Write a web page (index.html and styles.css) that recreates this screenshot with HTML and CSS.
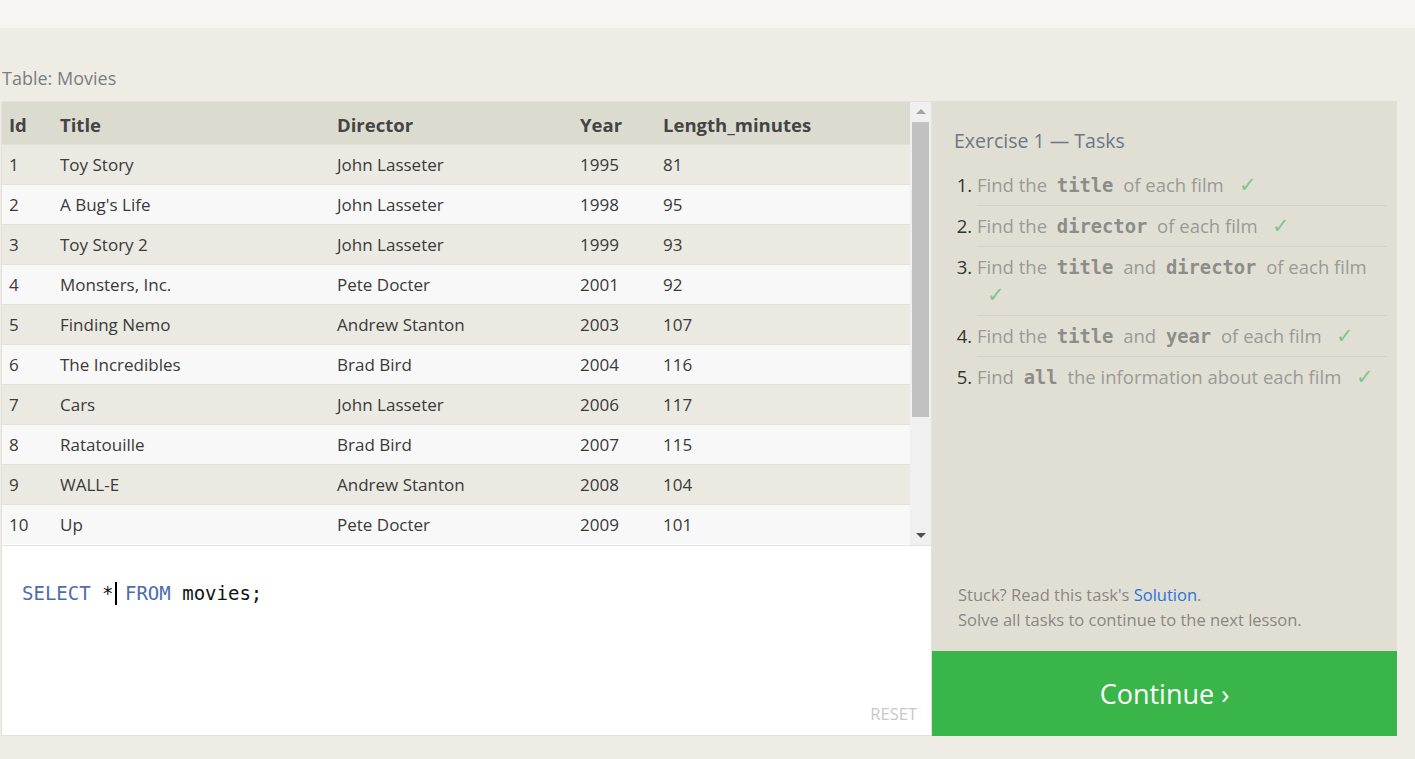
FILE: index.html
```html
<!DOCTYPE html>
<html>
<head>
<meta charset="utf-8">
<link rel="stylesheet" href="styles.css">
</head>
<body>
<div class="topbar"></div>
<div class="label">Table: Movies</div>
<div class="main">
  <div class="left">
    <div class="tablewrap">
      <div class="tablescroll">
        <table class="movies">
          <colgroup><col class="c1"><col class="c2"><col class="c3"><col class="c4"><col class="c5"></colgroup>
          <thead><tr><th>Id</th><th>Title</th><th>Director</th><th>Year</th><th>Length_minutes</th></tr></thead>
          <tbody>
            <tr><td>1</td><td>Toy Story</td><td>John Lasseter</td><td>1995</td><td>81</td></tr>
            <tr><td>2</td><td>A Bug's Life</td><td>John Lasseter</td><td>1998</td><td>95</td></tr>
            <tr><td>3</td><td>Toy Story 2</td><td>John Lasseter</td><td>1999</td><td>93</td></tr>
            <tr><td>4</td><td>Monsters, Inc.</td><td>Pete Docter</td><td>2001</td><td>92</td></tr>
            <tr><td>5</td><td>Finding Nemo</td><td>Andrew Stanton</td><td>2003</td><td>107</td></tr>
            <tr><td>6</td><td>The Incredibles</td><td>Brad Bird</td><td>2004</td><td>116</td></tr>
            <tr><td>7</td><td>Cars</td><td>John Lasseter</td><td>2006</td><td>117</td></tr>
            <tr><td>8</td><td>Ratatouille</td><td>Brad Bird</td><td>2007</td><td>115</td></tr>
            <tr><td>9</td><td>WALL-E</td><td>Andrew Stanton</td><td>2008</td><td>104</td></tr>
            <tr><td>10</td><td>Up</td><td>Pete Docter</td><td>2009</td><td>101</td></tr>
          </tbody>
        </table>
      </div>
      <div class="scrollbar">
        <div class="arrow up"></div>
        <div class="thumb"></div>
        <div class="track"></div>
        <div class="arrow down"></div>
      </div>
    </div>
    <div class="editor">
      <div class="code"><span class="kw">SELECT</span> *<span class="caret"></span> <span class="kw">FROM</span> movies;</div>
      <div class="reset">RESET</div>
    </div>
  </div>
  <div class="right">
    <div class="tasks">
      <div class="tasks-title">Exercise 1 — Tasks</div>
      <ol class="tasklist">
        <li>Find the <code>title</code> of each film <span class="check">✓</span></li>
        <li>Find the <code>director</code> of each film <span class="check">✓</span></li>
        <li>Find the <code>title</code> and <code>director</code> of each film <span class="check">✓</span></li>
        <li>Find the <code>title</code> and <code>year</code> of each film <span class="check">✓</span></li>
        <li>Find <code>all</code> the information about each film <span class="check">✓</span></li>
      </ol>
    </div>
    <div class="help">
      <div>Stuck? Read this task's <a class="link">Solution</a>.</div>
      <div>Solve all tasks to continue to the next lesson.</div>
    </div>
    <div class="continue">Continue ›</div>
  </div>
</div>
</body>
</html>
```

FILE: styles.css
```css
html, body {
  margin: 0;
  padding: 0;
}
body {
  background: #efece5;
  font-family: "Open Sans", "Noto Sans", sans-serif;
  width: 1415px;
  height: 759px;
  overflow: hidden;
}
.topbar {
  height: 28px;
  background: #f6f5f1;
}
.label {
  margin: 38px 0 0 2px;
  height: 35px;
  font-size: 18px;
  line-height: 24px;
  color: #7d7d7d;
}
.main {
  display: flex;
  margin-left: 1px;
  width: 1397px;
  height: 635px;
}
.left {
  box-sizing: border-box;
  width: 931px;
  height: 635px;
  border: 1px solid #e4e2da;
  background: #fff;
  display: flex;
  flex-direction: column;
}
.tablewrap {
  display: flex;
  height: 443px;
  border-bottom: 1px solid #e4e2da;
}
.tablescroll {
  width: 908px;
  overflow: hidden;
}
.movies {
  border-collapse: collapse;
  width: 908px;
  table-layout: fixed;
  font-size: 17px;
  color: #3a3a3a;
}
.c1 { width: 51px; }
.c2 { width: 277px; }
.c3 { width: 243px; }
.c4 { width: 83px; }
.c5 { width: 254px; }
.movies th {
  background: #dcdbd0;
  text-align: left;
  font-weight: 700;
  color: #444;
  height: 42px;
  padding: 3px 0 0 7px;
  box-sizing: border-box;
  font-size: 18.5px;
}
.movies td {
  height: 39px;
  padding: 0 0 0 7px;
  border-top: 1px solid #e2e1dc;
  white-space: nowrap;
}
.movies tbody tr:nth-child(odd) td {
  background: #eae9e2;
}
.movies tbody tr:nth-child(even) td {
  background: #f8f8f8;
}
.scrollbar {
  width: 21px;
  background: #f0f0f0;
  display: flex;
  flex-direction: column;
  align-items: center;
}
.arrow {
  width: 0;
  height: 0;
  border-left: 5px solid transparent;
  border-right: 5px solid transparent;
}
.arrow.up {
  border-bottom: 5px solid #a3a3a3;
  margin: 7px 0 8px;
}
.thumb {
  width: 17px;
  height: 295px;
  background: #c1c1c1;
}
.track {
  flex: 1;
}
.arrow.down {
  border-top: 5px solid #505050;
  margin: 0 0 7px;
}
.editor {
  flex: 1;
  display: flex;
  flex-direction: column;
  padding: 0 14px 0 20px;
}
.code {
  margin-top: 36px;
  font-family: "DejaVu Sans Mono", "Liberation Mono", monospace;
  font-size: 19px;
  line-height: 22px;
  color: #111;
  white-space: pre;
}
.kw {
  color: #4a6ea8;
}
.caret {
  display: inline-block;
  width: 2px;
  height: 23px;
  background: #000;
  vertical-align: -5px;
  margin-left: 1px;
  margin-right: -3px;
}
.reset {
  margin-top: auto;
  margin-bottom: 10px;
  align-self: flex-end;
  font-size: 16.5px;
  color: #c8c8c8;
}
.right {
  width: 465px;
  height: 635px;
  background: #e1dfd4;
  display: flex;
  flex-direction: column;
}
.tasks {
  flex: 1;
  padding: 26px 10px 0 22px;
}
.tasks-title {
  font-size: 19.5px;
  line-height: 28px;
  color: #6b7786;
  margin-bottom: 10px;
}
.tasklist {
  margin: 0;
  padding: 0 0 0 23px;
  font-size: 18.5px;
  color: #9a9a96;
}
.tasklist li {
  padding: 6px 0;
  line-height: 28px;
  border-bottom: 1px solid #d5d3c8;
}
.tasklist li:last-child {
  border-bottom: none;
}
.tasklist li::marker {
  color: #333;
}
.tasklist code {
  font-family: "DejaVu Sans Mono", "Liberation Mono", monospace;
  font-weight: 700;
  font-size: 18.8px;
  line-height: 1;
  color: #8c8c88;
  padding: 0 5px;
}
.check {
  color: #7dc68c;
  font-size: 21px;
  line-height: 1;
  margin-left: 10px;
}
.help {
  padding: 0 10px 19px 26px;
  font-size: 16.5px;
  line-height: 25px;
  color: #8a8781;
}
.link {
  color: #2c73d8;
}
.continue {
  height: 85px;
  background: #3ab54a;
  color: #fff;
  font-size: 27px;
  display: flex;
  align-items: center;
  justify-content: center;
}
```
